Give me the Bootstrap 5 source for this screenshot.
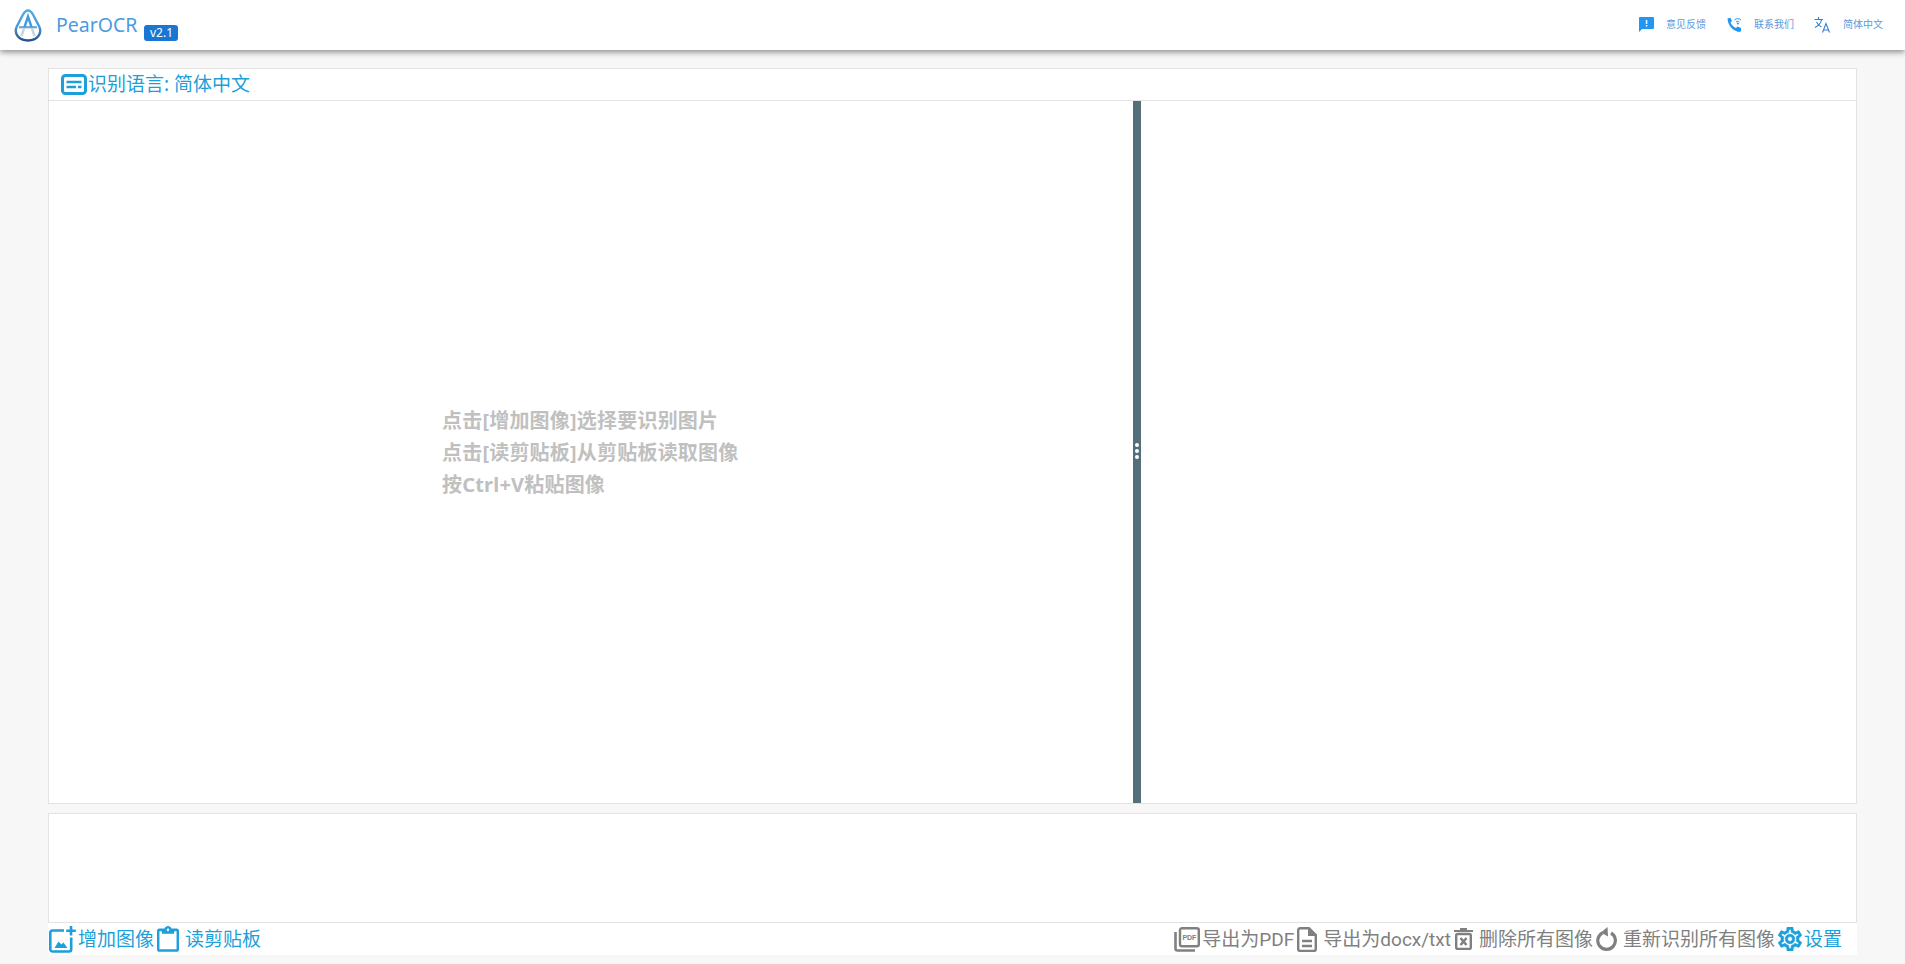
<!DOCTYPE html>
<html lang="zh-CN">
<head>
    <meta charset="UTF-8">
    <meta name="viewport" content="width=device-width, initial-scale=1.0">
    <title>PearOCR</title>
    <link href="https://cdn.jsdelivr.net/npm/bootstrap@5.3.0/dist/css/bootstrap.min.css" rel="stylesheet">
    <style>
        html, body { height: 100%; }
        body {
            background: #f7f7f7;
            font-family: "Noto Sans", "Noto Sans CJK SC", sans-serif;
            overflow: hidden;
        }
        .top-bar {
            height: 50px;
            background: #fff;
            box-shadow: 0 2px 6px rgba(0, 0, 0, .45);
            padding: 0 22px 0 14px;
            position: relative;
        }
        .brand-name { font-size: 19.5px; color: #4a9be0; margin-left: 14px; line-height: 1; }
        .brand-ver {
            background: #1976d2;
            color: #fff;
            font-size: 12px;
            line-height: 16px;
            height: 16px;
            width: 34px;
            text-align: center;
            border-radius: 3px;
            margin: 15px 0 0 7px;
        }
        .top-links { padding-bottom: 2px; }
        .top-link { color: #5c9ade; font-size: 10px; margin-left: 21px; }
        .top-link:last-child { margin-left: 20px; }
        .top-link svg { margin-right: 12px; }
        .work-area { padding: 18px 48px 0; }
        .lang-head {
            height: 33px;
            background: #fff;
            border: 1px solid #e3e3e3;
            padding-left: 12px;
            color: #1c9fdb;
            font-size: 19px;
            gap: 1px;
        }
        .split-box {
            height: 703px;
            background: #fff;
            border: 1px solid #e3e3e3;
            border-top: 0;
        }
        .pane-left { width: 1084px; }
        .pane-right { flex: 1; }
        .hint-text {
            color: #c0c0c0;
            font-size: 20px;
            font-weight: 700;
            letter-spacing: .2px;
            line-height: 32px;
            margin: 0 0 0 393px;
            padding-top: 2px;
        }
        .split-bar {
            width: 8px;
            background: #546e7a;
            gap: 2px;
            padding-bottom: 2px;
        }
        .split-bar i { width: 4px; height: 4px; background: #fff; border-radius: 50%; }
        .thumb-box {
            height: 110px;
            margin-top: 9px;
            background: #fff;
            border: 1px solid #e3e3e3;
        }
        .tool-row {
            height: 32px;
            background: #fff;
            padding: 0 15px 0 1px;
            font-family: Roboto, "Noto Sans CJK SC", sans-serif;
            font-size: 19px;
            line-height: 1;
        }
        .tool-btn { gap: 2px; color: #1c9fdb; white-space: nowrap; }
        .tool-btn.muted-btn { color: #808080; }
        .tool-group { gap: 3px; }
    </style>
</head>
<body>
    <nav class="top-bar d-flex align-items-center">
        <svg width="28" height="33" viewBox="0 0 28 33" fill="none">
            <defs>
                <linearGradient id="logoEdge" x1="0" y1="0" x2="0" y2="1">
                    <stop offset="0" stop-color="#55a9e4"/>
                    <stop offset=".55" stop-color="#4a97d6"/>
                    <stop offset="1" stop-color="#24528f"/>
                </linearGradient>
                <linearGradient id="logoLetter" x1="0" y1="0" x2="0" y2="1">
                    <stop offset="0" stop-color="#3e9be0"/>
                    <stop offset=".55" stop-color="#3e9be0"/>
                    <stop offset=".6" stop-color="#c9d3da"/>
                    <stop offset="1" stop-color="#c9d3da"/>
                </linearGradient>
            </defs>
            <path d="M14 1.500C11.500 1.500 10 3.500 8.500 6.500L2.800 17.500C-0.500 25 5 31.500 14 31.500C23 31.500 28.500 25 25.200 17.500L19.500 6.500C18 3.500 16.500 1.500 14 1.500Z" stroke="url(#logoEdge)" stroke-width="2.400"/>
            <path d="M7.500 27L14 7.500L20.500 27M5 18.500H23" stroke="url(#logoLetter)" stroke-width="2.400"/>
        </svg>
        <span class="brand-name">PearOCR</span>
        <span class="brand-ver">v2.1</span>
        <div class="top-links ms-auto d-flex align-items-center">
            <span class="top-link d-flex align-items-center">
                <svg width="15" height="15" viewBox="0 0 15 15"><path d="M1 0H14A1 1 0 0 1 15 1V11A1 1 0 0 1 14 12H3L0 15V1A1 1 0 0 1 1 0Z" fill="#2196f3"/><rect x="6.800" y="3" width="1.500" height="4" fill="#fff"/><rect x="6.800" y="8" width="1.500" height="1.500" fill="#fff"/></svg>
                意见反馈
            </span>
            <span class="top-link d-flex align-items-center">
                <svg width="15" height="15" viewBox="0 0 15 15" fill="none"><path d="M0.500 1.500L3.500 0.800L5 4L3.500 5.500C4.500 8 6.500 10 9 11L10.500 9.500L14 11V14L12.500 15C6 14 1 9 0.500 1.500Z" fill="#2196f3"/><path d="M7.500 3C9.500 1.200 12 1.200 14 3M9 5C10 4 11.500 4 12.500 5" stroke="#2196f3" stroke-width="1"/><circle cx="10.800" cy="6.500" r="1" fill="#2196f3"/></svg>
                联系我们
            </span>
            <span class="top-link d-flex align-items-center">
                <svg width="17" height="17" viewBox="0 0 17 17" fill="none" stroke="#2f80d0" stroke-width="1.100"><path d="M0.500 3.500H9M4.500 1V3.500M7.500 3.500C7 7 4 10 1 11.500M2.500 6C3.500 8 5.500 10 7.500 11"/><path d="M8.500 16.500L12 7.500L15.500 16.500M9.700 14H14.300"/></svg>
                简体中文
            </span>
        </div>
    </nav>

    <main class="work-area">
        <div class="lang-head d-flex align-items-center">
            <svg width="26" height="21" viewBox="0 0 26 21" fill="none">
                <rect x="1.500" y="1.500" width="23" height="18" rx="3" stroke="#1c9fdb" stroke-width="3"/>
                <path d="M5.500 8H20.500M5.500 13H15M17 13H20.500" stroke="#1c9fdb" stroke-width="2.400"/>
            </svg>
            <span>识别语言: 简体中文</span>
        </div>

        <div class="split-box d-flex">
            <div class="pane-left d-flex align-items-center">
                <p class="hint-text">点击[增加图像]选择要识别图片<br>点击[读剪贴板]从剪贴板读取图像<br>按Ctrl+V粘贴图像</p>
            </div>
            <div class="split-bar d-flex flex-column align-items-center justify-content-center">
                <i></i><i></i><i></i>
            </div>
            <div class="pane-right"></div>
        </div>

        <div class="thumb-box"></div>

        <div class="tool-row d-flex align-items-center justify-content-between">
            <div class="tool-group d-flex align-items-center">
                <span class="tool-btn d-flex align-items-center">
                    <svg width="27" height="27" viewBox="0 0 27 27" fill="none">
                        <path d="M15 4.500H3.500A2.200 2.200 0 0 0 1.300 6.700V23.300A2.200 2.200 0 0 0 3.500 25.500H20A2.200 2.200 0 0 0 22.200 23.300V11.500" stroke="#1c9fdb" stroke-width="2.600"/>
                        <path d="M22 0V9.500M17.200 4.700H26.800" stroke="#1c9fdb" stroke-width="2.600"/>
                        <path d="M5.500 22L9.500 15.500L12.500 18.500L14.500 16.500L18.500 22Z" fill="#1c9fdb"/>
                    </svg>
                    增加图像
                </span>
                <span class="tool-btn d-flex align-items-center">
                    <svg width="22" height="27" viewBox="3 1 18 21" preserveAspectRatio="none">
                        <path d="M19,3H14.820C14.400,1.840 13.300,1 12,1C10.700,1 9.600,1.840 9.180,3H5A2,2 0 0,0 3,5V19A2,2 0 0,0 5,21H19A2,2 0 0,0 21,19V5A2,2 0 0,0 19,3M12,3A1,1 0 0,1 13,4A1,1 0 0,1 12,5A1,1 0 0,1 11,4A1,1 0 0,1 12,3M7,7H17V5H19V19H5V5H7V7Z" fill="#1c9fdb"/>
                    </svg>
                    <span class="ms-1">读剪贴板</span>
                </span>
            </div>
            <div class="tool-group d-flex align-items-center">
                <span class="tool-btn muted-btn d-flex align-items-center">
                    <svg width="26" height="25" viewBox="0 0 26 25" fill="none">
                        <path d="M1.500 5V21.500A2 2 0 0 0 3.500 23.500H21" stroke="#808080" stroke-width="2.600"/>
                        <rect x="6" y="1.200" width="18.800" height="18" rx="2" stroke="#808080" stroke-width="2.400"/>
                        <text x="15.400" y="13" text-anchor="middle" font-family="Liberation Sans" font-size="7" font-weight="700" fill="#808080">PDF</text>
                    </svg>
                    <span>导出为PDF</span>
                </span>
                <span class="tool-btn muted-btn d-flex align-items-center">
                    <svg width="20" height="25" viewBox="0 0 20 25" fill="none">
                        <path d="M3 1.200H12L18.800 8V22A2 2 0 0 1 16.800 24H3A2 2 0 0 1 1.200 22V3A2 2 0 0 1 3 1.200Z" stroke="#808080" stroke-width="2.400"/>
                        <path d="M11 1V9H19Z" fill="#808080"/>
                        <path d="M5 14H15M5 19H15" stroke="#808080" stroke-width="2.400"/>
                    </svg>
                    <span class="ms-1">导出为docx/txt</span>
                </span>
                <span class="tool-btn muted-btn d-flex align-items-center">
                    <svg width="19" height="22" viewBox="0 0 19 22" fill="none">
                        <path d="M0 3H19M6 1H13" stroke="#808080" stroke-width="2.200"/>
                        <rect x="2.200" y="6" width="14.600" height="15" rx="1.500" stroke="#808080" stroke-width="2.400"/>
                        <path d="M6.500 10L12.500 17M12.500 10L6.500 17" stroke="#808080" stroke-width="2.600"/>
                    </svg>
                    <span class="ms-1">删除所有图像</span>
                </span>
                <span class="tool-btn muted-btn d-flex align-items-center">
                    <svg width="21" height="24" viewBox="0 0 21 24" fill="none">
                        <path d="M6.500 5.800A8.800 8.800 0 1 0 15 6" stroke="#808080" stroke-width="3.200"/>
                        <path d="M11.500 0L5 5.500L12 9.500Z" fill="#808080"/>
                    </svg>
                    <span class="ms-1">重新识别所有图像</span>
                </span>
                <span class="tool-btn d-flex align-items-center">
                    <svg width="24" height="24" viewBox="2 2 20 20">
                        <path d="M12,8A4,4 0 0,1 16,12A4,4 0 0,1 12,16A4,4 0 0,1 8,12A4,4 0 0,1 12,8M12,10A2,2 0 0,0 10,12A2,2 0 0,0 12,14A2,2 0 0,0 14,12A2,2 0 0,0 12,10M10,22C9.750,22 9.540,21.820 9.500,21.580L9.130,18.930C8.500,18.680 7.960,18.340 7.440,17.940L4.950,18.950C4.730,19.030 4.460,18.950 4.340,18.730L2.340,15.270C2.210,15.050 2.270,14.780 2.460,14.630L4.570,12.970L4.500,12L4.570,11L2.460,9.370C2.270,9.220 2.210,8.950 2.340,8.730L4.340,5.270C4.460,5.050 4.730,4.960 4.950,5.050L7.440,6.050C7.960,5.660 8.500,5.320 9.130,5.070L9.500,2.420C9.540,2.180 9.750,2 10,2H14C14.250,2 14.460,2.180 14.500,2.420L14.870,5.070C15.500,5.320 16.040,5.660 16.560,6.050L19.050,5.050C19.270,4.960 19.540,5.050 19.660,5.270L21.660,8.730C21.790,8.950 21.730,9.220 21.540,9.370L19.430,11L19.500,12L19.430,13L21.540,14.660C21.730,14.810 21.790,15.080 21.660,15.300L19.660,18.760C19.540,18.980 19.270,19.070 19.050,18.980L16.560,17.980C16.040,18.380 15.500,18.720 14.870,18.970L14.500,21.620C14.460,21.820 14.250,22 14,22H10M11.250,4L10.880,6.610C9.680,6.860 8.620,7.500 7.850,8.390L5.440,7.350L4.690,8.650L6.800,10.200C6.400,11.370 6.400,12.640 6.800,13.800L4.680,15.360L5.430,16.660L7.860,15.620C8.630,16.500 9.680,17.140 10.870,17.380L11.240,20H12.760L13.130,17.390C14.320,17.140 15.370,16.500 16.140,15.620L18.570,16.660L19.320,15.360L17.200,13.810C17.600,12.640 17.600,11.370 17.200,10.200L19.310,8.650L18.560,7.350L16.150,8.390C15.380,7.500 14.320,6.860 13.120,6.620L12.750,4H11.250Z" fill="#1c9fdb" stroke="#1c9fdb" stroke-width=".5"/>
                    </svg>
                    <span>设置</span>
                </span>
            </div>
        </div>
    </main>

    <script src="https://cdn.jsdelivr.net/npm/bootstrap@5.3.0/dist/js/bootstrap.bundle.min.js"></script>
</body>
</html>
